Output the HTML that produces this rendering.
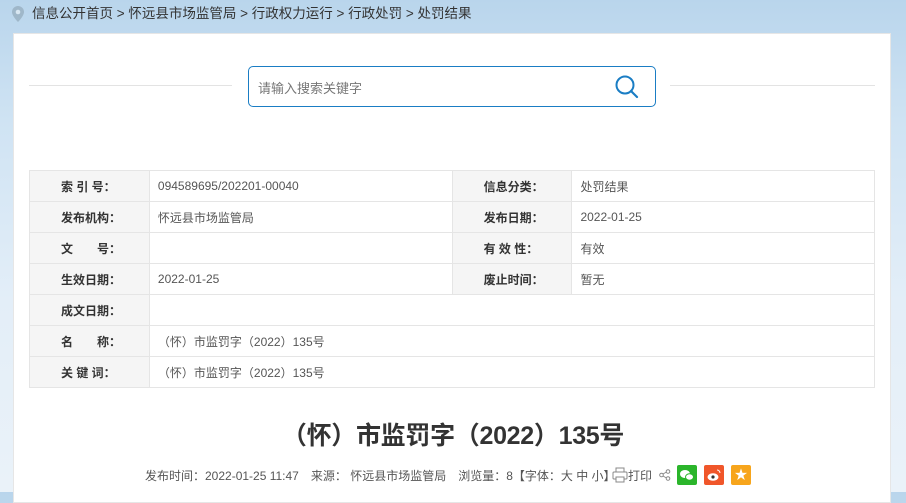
<!DOCTYPE html>
<html><head><meta charset="utf-8"><style>
*{margin:0;padding:0;box-sizing:border-box}
body{width:906px;height:492px;overflow:hidden;font-family:"Liberation Sans","Noto Sans CJK SC",sans-serif;background:linear-gradient(180deg,#b9d5ec 0,#cfe3f3 120px,#e3eef8 300px,#eaf2f9 492px);position:relative}
.bc{position:absolute;left:32px;top:5px;font-size:13.5px;color:#333;line-height:18px}
.pin{position:absolute;left:11px;top:5px}
.panel{position:absolute;left:13px;top:33px;width:878px;height:470px;background:#fff;border:1px solid #e6e6e6}
.line{position:absolute;top:85px;height:1px;background:#e3e3e3}
.search{position:absolute;left:248px;top:66px;width:408px;height:41px;border:1px solid #1a7dc4;border-radius:5px}
.search span{position:absolute;left:9px;top:11px;font-size:13px;color:#777}
table{position:absolute;left:29px;top:170px;width:846px;border-collapse:collapse;font-size:12px}
td{border:1px solid #e5e5e5;height:31px;padding:0 8px;color:#555}
td.l{background:#f5f5f5;font-weight:bold;color:#333;width:120px;padding-left:31px}
td.v{width:303px}
h1{position:absolute;left:0;width:906px;top:416px;text-align:center;font-size:25px;color:#333;font-weight:bold;letter-spacing:-0.3px}
.meta{position:absolute;left:145px;top:467px;font-size:12px;color:#555;white-space:nowrap}
.ic{position:absolute;top:465px;width:20px;height:20px;border-radius:2px}
</style></head><body>
<svg class="pin" width="14" height="18" viewBox="0 0 14 18"><path d="M7 1a6 6 0 0 0-6 6c0 4 6 10 6 10s6-6 6-10a6 6 0 0 0-6-6z" fill="#9fb7c9"/><circle cx="7" cy="7" r="2.3" fill="#d8e6f1"/></svg>
<div class="bc">信息公开首页 &gt; 怀远县市场监管局 &gt; 行政权力运行 &gt; 行政处罚 &gt; 处罚结果</div>
<div class="panel"></div>
<div class="line" style="left:29px;width:203px"></div>
<div class="line" style="left:670px;width:205px"></div>
<div class="search"><span>请输入搜索关键字</span>
<svg style="position:absolute;left:365px;top:7px" width="26" height="26" viewBox="0 0 26 26"><circle cx="11" cy="11" r="8.5" fill="none" stroke="#1a7dc4" stroke-width="2"/><path d="M17 17l6 6" stroke="#1a7dc4" stroke-width="2.2" stroke-linecap="round"/></svg></div>
<table>
<tr><td class="l">索 引 号：</td><td class="v">094589695/202201-00040</td><td class="l">信息分类：</td><td class="v">处罚结果</td></tr>
<tr><td class="l">发布机构：</td><td class="v">怀远县市场监管局</td><td class="l">发布日期：</td><td class="v">2022-01-25</td></tr>
<tr><td class="l">文　　号：</td><td class="v"></td><td class="l">有 效 性：</td><td class="v">有效</td></tr>
<tr><td class="l">生效日期：</td><td class="v">2022-01-25</td><td class="l">废止时间：</td><td class="v">暂无</td></tr>
<tr><td class="l">成文日期：</td><td colspan="3"></td></tr>
<tr><td class="l">名　　称：</td><td colspan="3">（怀）市监罚字（2022）135号</td></tr>
<tr><td class="l">关 键 词：</td><td colspan="3">（怀）市监罚字（2022）135号</td></tr>
</table>
<h1>（怀）市监罚字（2022）135号</h1>
<div class="meta">发布时间：2022-01-25 11:47　来源： 怀远县市场监管局　浏览量：8【字体：大 中 小】</div>
<div class="meta" style="left:628px">打印</div>
<svg style="position:absolute;left:612px;top:467px" width="16" height="16" viewBox="0 0 16 16"><rect x="4" y="1" width="8" height="4" fill="none" stroke="#888"/><rect x="1" y="5" width="14" height="7" rx="1" fill="none" stroke="#888"/><rect x="4" y="10" width="8" height="5" fill="#fff" stroke="#888"/></svg>
<svg style="position:absolute;left:659px;top:469px" width="12" height="12" viewBox="0 0 12 12"><circle cx="9" cy="2.5" r="1.8" fill="none" stroke="#888"/><circle cx="2.5" cy="6" r="1.8" fill="none" stroke="#888"/><circle cx="9" cy="9.5" r="1.8" fill="none" stroke="#888"/><path d="M4 5l3.5-2M4 7l3.5 2" stroke="#888"/></svg>
<div class="ic" style="left:677px;background:#2bb52b"><svg width="20" height="20"><ellipse cx="8" cy="9" rx="5" ry="4" fill="#fff"/><ellipse cx="12.5" cy="12" rx="4" ry="3.2" fill="#fff" stroke="#2bb52b"/></svg></div>
<div class="ic" style="left:704px;background:#f0562a"><svg width="20" height="20"><ellipse cx="9" cy="12" rx="5.5" ry="3.8" fill="#fff"/><circle cx="9" cy="12" r="1.6" fill="#333"/><path d="M13 5a3 3 0 0 1 3 3" stroke="#fff" fill="none"/></svg></div>
<div class="ic" style="left:731px;background:#f7a51c;color:#fff;text-align:center;font-size:13px;line-height:20px">★</div>
</body></html>
